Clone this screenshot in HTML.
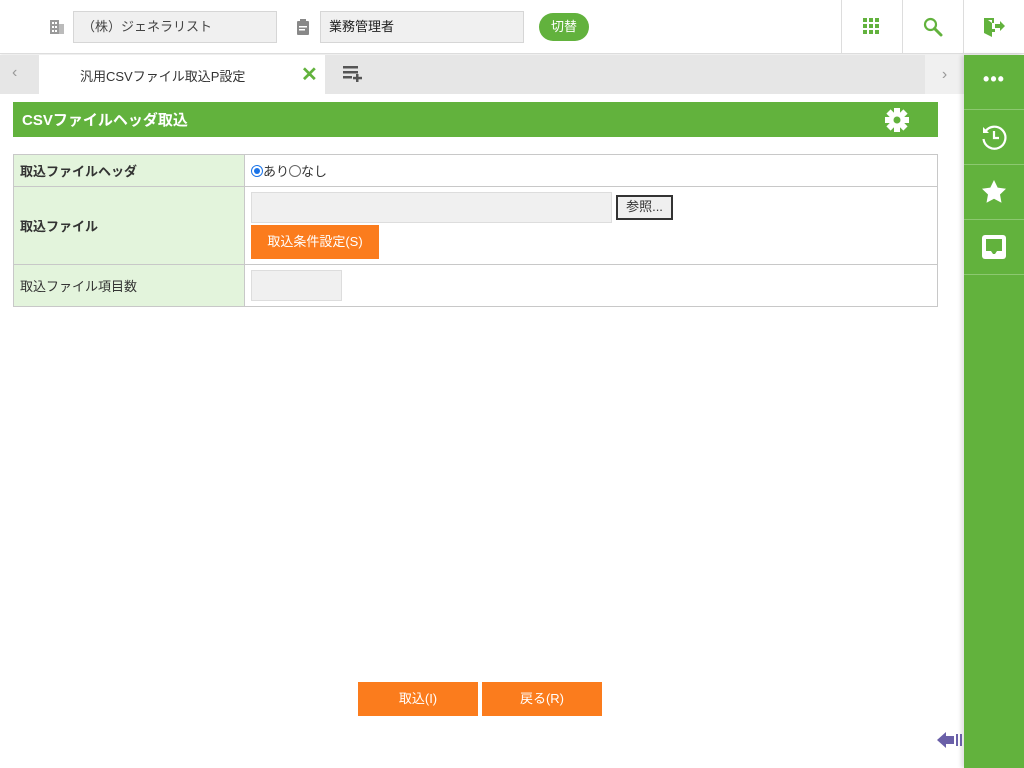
<!DOCTYPE html>
<html><head><meta charset="utf-8"><style>
*{box-sizing:border-box;margin:0;padding:0}
body{width:1024px;height:768px;position:relative;overflow:hidden;background:#fff;font-family:"Liberation Sans","Noto Sans CJK JP",sans-serif;font-size:13px;color:#333}
.abs{position:absolute}
.top{left:0;top:0;width:1024px;height:54px;background:#fff;border-bottom:1px solid #ddd;box-shadow:0 2px 3px rgba(0,0,0,.08)}
.inp{background:#f0f0f0;border:1px solid #d6d6d6;height:32px;top:11px;line-height:30px;padding-left:8px;font-size:13px;color:#444}
.sep{top:0;width:1px;height:54px;background:#ddd}
.tabbar{left:0;top:55px;width:964px;height:39px;background:#e6e6e6}
.side{left:964px;top:55px;width:60px;height:713px;background:#62b23d;box-shadow:-3px 0 4px rgba(0,0,0,.12)}
.side .cell{height:55px;border-bottom:1px solid #8cc870;display:flex;align-items:center;justify-content:center}
table{border-collapse:collapse;position:absolute;left:13px;top:154px;width:925px}
td{border:1px solid #c8c8c8;font-size:13px}
td.h{background:#e3f4dc;width:231px;padding-left:6px;color:#333}
.btn{background:#fb7c1d;color:#fff;text-align:center;font-size:13px}
</style></head><body>
<div class="abs top"></div>
<svg class="abs" style="left:49px;top:19px" width="16" height="16"><rect x="1" y="1" width="9" height="14" fill="#999"/><rect x="10" y="5" width="5" height="10" fill="#bbb"/><g fill="#fff"><rect x="3" y="3" width="2" height="2"/><rect x="6" y="3" width="2" height="2"/><rect x="3" y="7" width="2" height="2"/><rect x="6" y="7" width="2" height="2"/><rect x="3" y="11" width="2" height="2"/><rect x="6" y="11" width="2" height="2"/></g></svg>
<div class="abs inp" style="left:73px;width:204px">（株）ジェネラリスト</div>
<svg class="abs" style="left:296px;top:19px" width="14" height="16"><rect x="1" y="2" width="12" height="14" rx="1" fill="#888"/><rect x="4" y="0" width="6" height="4" fill="#888"/><rect x="3" y="7" width="8" height="1.5" fill="#fff"/><rect x="3" y="10" width="6" height="1.5" fill="#fff"/></svg>
<div class="abs inp" style="left:320px;width:204px;color:#222">業務管理者</div>
<div class="abs" style="left:539px;top:13px;width:50px;height:28px;border-radius:14px;background:#62b23d;color:#fff;text-align:center;line-height:28px;font-size:13px">切替</div>
<div class="abs sep" style="left:841px"></div><div class="abs sep" style="left:902px"></div><div class="abs sep" style="left:963px"></div>
<svg class="abs" style="left:863px;top:18px" width="17" height="17" fill="#62b23d"><rect x="0" y="0" width="4" height="4"/><rect x="6" y="0" width="4" height="4"/><rect x="12" y="0" width="4" height="4"/><rect x="0" y="6" width="4" height="4"/><rect x="6" y="6" width="4" height="4"/><rect x="12" y="6" width="4" height="4"/><rect x="0" y="12" width="4" height="4"/><rect x="6" y="12" width="4" height="4"/><rect x="12" y="12" width="4" height="4"/></svg>
<svg class="abs" style="left:923px;top:17px" width="20" height="20"><circle cx="7.5" cy="7.5" r="5.5" fill="none" stroke="#62b23d" stroke-width="2.2"/><line x1="11.5" y1="11.5" x2="18" y2="18" stroke="#62b23d" stroke-width="3" stroke-linecap="round"/></svg>
<svg class="abs" style="left:983px;top:16px" width="22" height="22" fill="#62b23d"><path d="M1 2h10v5H9V4H5l4 3v14L1 17z"/><path d="M9 13h3v3H9zM12 8h5V5l5 5-5 5v-3h-5z"/></svg>
<div class="abs tabbar"></div>
<div class="abs" style="left:12px;top:64px;color:#999;font-size:16px">‹</div>
<div class="abs" style="left:39px;top:55px;width:286px;height:39px;background:#fff"></div>
<div class="abs" style="left:80px;top:66px;font-size:13px;color:#333">汎用CSVファイル取込P設定</div>
<div class="abs" style="left:301px;top:62px;color:#62b23d;font-size:20px;font-weight:bold">✕</div>
<svg class="abs" style="left:343px;top:66px" width="24" height="16" fill="#555"><rect x="0" y="0" width="15" height="2.5"/><rect x="0" y="5" width="15" height="2.5"/><rect x="0" y="10" width="9" height="2.5"/><rect x="13" y="8" width="2.5" height="8"/><rect x="10" y="10.8" width="9" height="2.5"/></svg>
<div class="abs" style="left:925px;top:55px;width:39px;height:39px;background:#f0f0f0;color:#999;font-size:16px;text-align:center;line-height:39px">›</div>
<div class="abs side">
<div class="cell"><span style="color:#fff;font-size:18px;font-weight:bold;letter-spacing:1px;margin-top:-6px">•••</span></div>
<div class="cell"><svg width="28" height="28" fill="none" stroke="#fff" stroke-width="2.2"><path d="M5 9A11 11 0 1 1 3.5 16"/><path d="M3 4v6h6" fill="#fff" stroke="none"/><path d="M14 8v7h5"/></svg></div>
<div class="cell"><svg width="26" height="26"><path d="M13 1l3.7 7.6 8.3 1.1-6 5.8 1.5 8.2L13 19.8 5.5 23.7 7 15.5 1 9.7l8.3-1.1z" fill="#fff"/></svg></div>
<div class="cell"><svg width="26" height="26"><rect x="1" y="1" width="24" height="24" rx="3" fill="#fff"/><path d="M5 5h16v12h-5l-2 3h-2l-2-3H5z" fill="#62b23d"/></svg></div>
</div>
<div class="abs" style="left:13px;top:102px;width:925px;height:35px;background:#62b23d"></div>
<div class="abs" style="left:22px;top:109px;color:#fff;font-size:15px;font-weight:bold">CSVファイルヘッダ取込</div>
<svg class="abs" style="left:885px;top:108px" width="24" height="24"><g fill="#fff" transform="translate(12 12)"><rect x="-3" y="-12" width="6" height="24"/><rect x="-3" y="-12" width="6" height="24" transform="rotate(45)"/><rect x="-3" y="-12" width="6" height="24" transform="rotate(90)"/><rect x="-3" y="-12" width="6" height="24" transform="rotate(135)"/><circle r="8"/></g><circle cx="12" cy="12" r="3.5" fill="#62b23d"/></svg>
<table>
<tr style="height:32px"><td class="h" style="font-weight:bold">取込ファイルヘッダ</td><td style="padding-left:6px"><span style="display:inline-block;width:12px;height:12px;border-radius:50%;border:1px solid #1a73e8;vertical-align:-1px;position:relative"><span style="position:absolute;left:2px;top:2px;width:6px;height:6px;border-radius:50%;background:#1a73e8"></span></span>あり<span style="display:inline-block;width:12px;height:12px;border-radius:50%;border:1px solid #666;vertical-align:-1px"></span>なし</td></tr>
<tr style="height:78px"><td class="h" style="font-weight:bold">取込ファイル</td><td style="padding-left:6px;position:relative"><div class="abs" style="left:6px;top:5px;width:361px;height:31px;background:#f0f0f0;border:1px solid #ddd"></div><div class="abs" style="left:371px;top:8px;width:57px;height:25px;border:2px solid #333;background:#efefef;text-align:center;line-height:20px;font-size:13px">参照...</div><div class="abs btn" style="left:6px;top:38px;width:128px;height:34px;line-height:34px">取込条件設定(S)</div></td></tr>
<tr style="height:42px"><td class="h">取込ファイル項目数</td><td style="padding-left:6px"><div style="width:91px;height:31px;background:#f0f0f0;border:1px solid #ddd"></div></td></tr>
</table>
<div class="abs btn" style="left:358px;top:682px;width:120px;height:34px;line-height:34px">取込(I)</div>
<div class="abs btn" style="left:482px;top:682px;width:120px;height:34px;line-height:34px">戻る(R)</div>
<svg class="abs" style="left:936px;top:731px" width="28" height="18" fill="#6a60a8"><path d="M1 9L10 1v4h8v8h-8v4z"/><rect x="20" y="3" width="2" height="12"/><rect x="24" y="3" width="2" height="12"/></svg>
</body></html>
